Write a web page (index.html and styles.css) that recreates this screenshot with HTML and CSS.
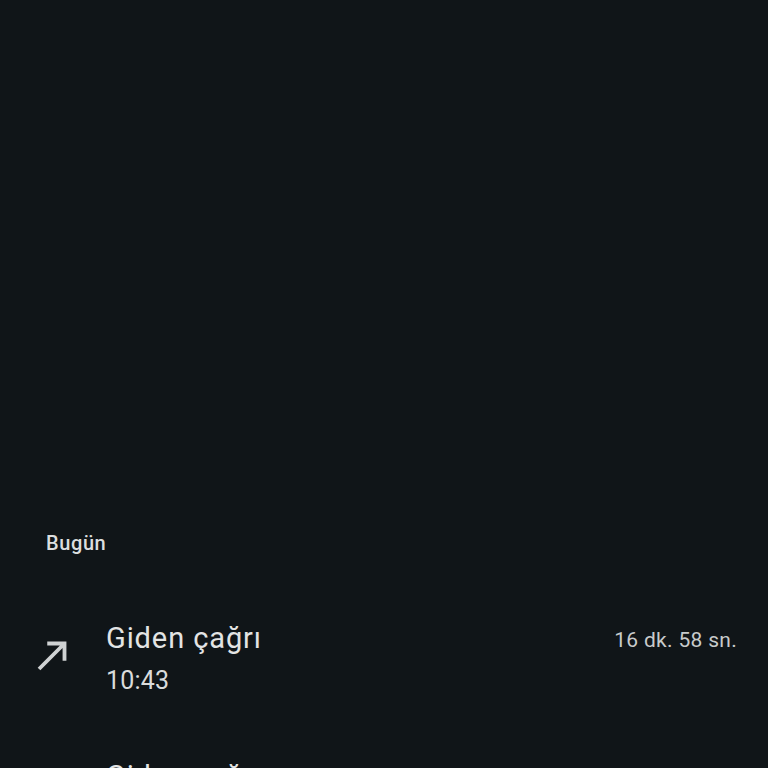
FILE: index.html
```html
<!DOCTYPE html>
<html lang="tr">
<head>
<meta charset="utf-8">
<link rel="stylesheet" href="styles.css">
</head>
<body>
<div class="screen">
  <div class="section-label">Bugün</div>
  <div class="call-list">
    <div class="call-row">
      <svg class="call-icon" viewBox="0 0 24 24"><path d="M9 5v2h6.59L4 18.59 5.41 20 17 8.41V15h2V5z"/></svg>
      <div class="call-text">
        <div class="call-title">Giden çağrı</div>
        <div class="call-time">10:43</div>
      </div>
      <div class="call-duration">16 dk. 58 sn.</div>
    </div>
    <div class="call-row">
      <svg class="call-icon" viewBox="0 0 24 24"><path d="M9 5v2h6.59L4 18.59 5.41 20 17 8.41V15h2V5z"/></svg>
      <div class="call-text">
        <div class="call-title">Giden çağrı</div>
        <div class="call-time">10:12</div>
      </div>
      <div class="call-duration">2 dk. 4 sn.</div>
    </div>
  </div>
</div>
</body>
</html>
```
FILE: styles.css
```css
html, body {
  margin: 0;
  padding: 0;
  background: #101518;
}
.screen {
  width: 768px;
  height: 768px;
  overflow: hidden;
  box-sizing: border-box;
  padding-top: 531px;
  font-family: Roboto, "Noto Sans", sans-serif;
  color: #e2e3e3;
}
.section-label {
  padding-left: 46px;
  font-size: 20px;
  line-height: 24px;
  font-weight: 500;
  letter-spacing: 0.6px;
  color: #dcdedf;
}
.call-list {
  margin-top: 65px;
  display: flex;
  flex-direction: column;
  gap: 61px;
}
.call-row {
  display: flex;
  align-items: flex-start;
  padding: 0 31px 0 30px;
}
.call-icon {
  width: 46px;
  height: 46px;
  margin-top: 12px;
  fill: #cfd2d3;
  flex: none;
}
.call-text {
  margin-left: 30px;
  flex: 1;
}
.call-title {
  font-size: 29px;
  line-height: 36px;
  letter-spacing: 0.9px;
  color: #e3e4e4;
}
.call-time {
  margin-top: 9px;
  font-size: 25px;
  line-height: 32px;
  letter-spacing: 0.2px;
  color: #dadcdc;
}
.call-duration {
  margin-top: 6px;
  font-size: 21px;
  line-height: 28px;
  letter-spacing: 0.3px;
  color: #c8cbcb;
}
```
